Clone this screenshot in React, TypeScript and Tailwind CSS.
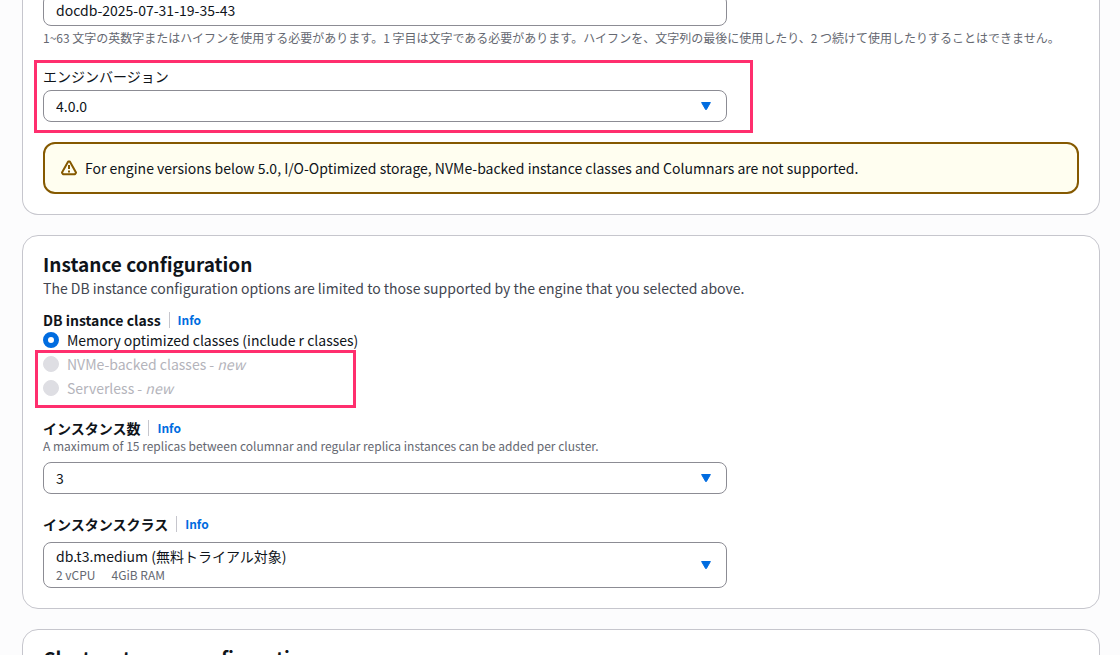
import { useState, type ReactNode } from "react";

const inputBox = "block w-full rounded-lg border border-[#8c8c94] bg-white px-3 text-sm text-[#0f141a]";

function Caret() {
  return (
    <svg viewBox="0 0 10 8" className="pointer-events-none absolute inset-y-0 right-4 my-auto h-2 w-[10px] fill-[#006ce0]">
      <path d="M.6.5h8.8L5.4 7.5h-.8z" stroke="#006ce0" strokeWidth="1" strokeLinejoin="round" />
    </svg>
  );
}

function InfoLink() {
  return (
    <span className="ml-2 flex h-4 items-center border-l border-[#c6c6cd] pl-2">
      <a href="#info" className="text-xs font-bold text-[#006ce0] hover:underline">
        Info
      </a>
    </span>
  );
}

function Highlight({ className }: { className: string }) {
  return <div aria-hidden="true" className={`pointer-events-none absolute border-[3px] border-[#ff2f6e] ${className}`} />;
}

function Card({ children, className = "" }: { children: ReactNode; className?: string }) {
  return <section className={`rounded-2xl border border-[#c6c6cd] bg-white px-5 ${className}`}>{children}</section>;
}

function ClassOption({ value, selected, onSelect, disabled, children }: {
  value: string;
  selected: string;
  onSelect: (value: string) => void;
  disabled?: boolean;
  children: ReactNode;
}) {
  return (
    <label className={`flex items-center gap-2 text-sm leading-5 ${disabled ? "text-[#b4b4bb]" : "text-[#0f141a]"}`}>
      <input
        type="radio"
        name="instance-class"
        value={value}
        checked={selected === value}
        disabled={disabled}
        onChange={() => onSelect(value)}
        className="h-4 w-4 shrink-0 appearance-none rounded-full border border-[#8c8c94] bg-white checked:border-[5px] checked:border-[#006ce0] disabled:border-[#dedee3] disabled:bg-[#dedee3]"
      />
      <span>{children}</span>
    </label>
  );
}

export default function App() {
  const [clusterId, setClusterId] = useState("docdb-2025-07-31-19-35-43");
  const [instanceClass, setInstanceClass] = useState("memory");

  return (
    <main className="flex h-screen flex-col gap-5 overflow-hidden bg-[#fcfcfd] pl-[22px] pr-5 font-['Noto_Sans_CJK_JP',sans-serif] text-[#0f141a]">
      <Card className="-mt-[6px] shrink-0 rounded-t-none border-t-0 pb-5">
        <input
          aria-label="クラスター識別子"
          aria-describedby="cluster-help"
          value={clusterId}
          onChange={(e) => setClusterId(e.target.value)}
          className={`${inputBox} h-8 max-w-[66%]`}
        />
        <p id="cluster-help" className="mt-1 text-xs leading-4 text-[#656871]">
          1~63 文字の英数字またはハイフンを使用する必要があります。1 字目は文字である必要があります。ハイフンを、文字列の最後に使用したり、2 つ続けて使用したりすることはできません。
        </p>

        <div className="relative mt-5 w-[66%]">
          <label htmlFor="engine" className="block text-sm leading-5">
            エンジンバージョン
          </label>
          <div className="relative mt-1">
            <select id="engine" className={`${inputBox} h-8 appearance-none`}>
              <option>4.0.0</option>
              <option>5.0.0</option>
            </select>
            <Caret />
          </div>
          <Highlight className="-bottom-[11px] -left-[9px] -right-[26px] -top-[6px]" />
        </div>

        <div role="status" className="mt-5 flex items-center gap-2 rounded-xl border-2 border-[#855900] bg-[#fffef0] px-4 py-[14px]">
          <svg viewBox="0 0 16 16" className="h-4 w-4 shrink-0" fill="none" stroke="#855900" strokeWidth="2" strokeLinejoin="round">
            <path d="M7.2 1.6h1.6L15 12.6l-1 1.6H2L1 12.6z" />
            <path d="M8 5v4M8 10.5v2" />
          </svg>
          <p className="text-sm leading-5">
            For engine versions below 5.0, I/O-Optimized storage, NVMe-backed instance classes and Columnars are not supported.
          </p>
        </div>
      </Card>

      <Card className="shrink-0 pb-5 pt-4">
        <h2 className="text-[19px] font-bold leading-6">Instance configuration</h2>
        <p className="mt-[2px] text-sm leading-5 text-[#424650]">
          The DB instance configuration options are limited to those supported by the engine that you selected above.
        </p>

        <fieldset className="mt-3">
          <div className="flex h-5 items-center">
            <legend className="text-sm font-bold leading-5">DB instance class</legend>
            <InfoLink />
          </div>
          <ClassOption value="memory" selected={instanceClass} onSelect={setInstanceClass}>
            Memory optimized classes (include r classes)
          </ClassOption>
          <div className="relative mt-1 flex flex-col gap-1">
            <ClassOption value="nvme" selected={instanceClass} onSelect={setInstanceClass} disabled>
              NVMe-backed classes - <em>new</em>
            </ClassOption>
            <ClassOption value="serverless" selected={instanceClass} onSelect={setInstanceClass} disabled>
              Serverless - <em>new</em>
            </ClassOption>
            <Highlight className="-bottom-[10px] -left-2 -top-1 w-[321px]" />
          </div>
        </fieldset>

        <div className="mt-5 w-[66%]">
          <div className="flex h-5 items-center">
            <label htmlFor="count" className="text-sm font-bold leading-5">
              インスタンス数
            </label>
            <InfoLink />
          </div>
          <p id="count-help" className="text-xs leading-4 text-[#656871]">
            A maximum of 15 replicas between columnar and regular replica instances can be added per cluster.
          </p>
          <div className="relative mt-2">
            <select id="count" aria-describedby="count-help" defaultValue="3" className={`${inputBox} h-8 appearance-none`}>
              <option>1</option>
              <option>2</option>
              <option>3</option>
            </select>
            <Caret />
          </div>
        </div>

        <div className="mt-5 w-[66%]">
          <div className="flex h-5 items-center">
            <label htmlFor="size" className="text-sm font-bold leading-5">
              インスタンスクラス
            </label>
            <InfoLink />
          </div>
          <div className="relative mt-2">
            <select id="size" aria-describedby="size-specs" className={`${inputBox} h-[46px] appearance-none pb-5 pt-[2px]`}>
              <option>db.t3.medium (無料トライアル対象)</option>
            </select>
            {/* specs of the chosen class, shown inside the box under its name */}
            <div id="size-specs" className="pointer-events-none absolute bottom-[5px] left-[13px] flex gap-4 text-xs leading-4 text-[#656871]">
              <span>2 vCPU</span>
              <span>4GiB RAM</span>
            </div>
            <Caret />
          </div>
        </div>
      </Card>

      <Card className="shrink-0 pb-5 pt-4">
        <h2 className="text-[19px] font-bold leading-6">Cluster storage configuration</h2>
      </Card>
    </main>
  );
}
